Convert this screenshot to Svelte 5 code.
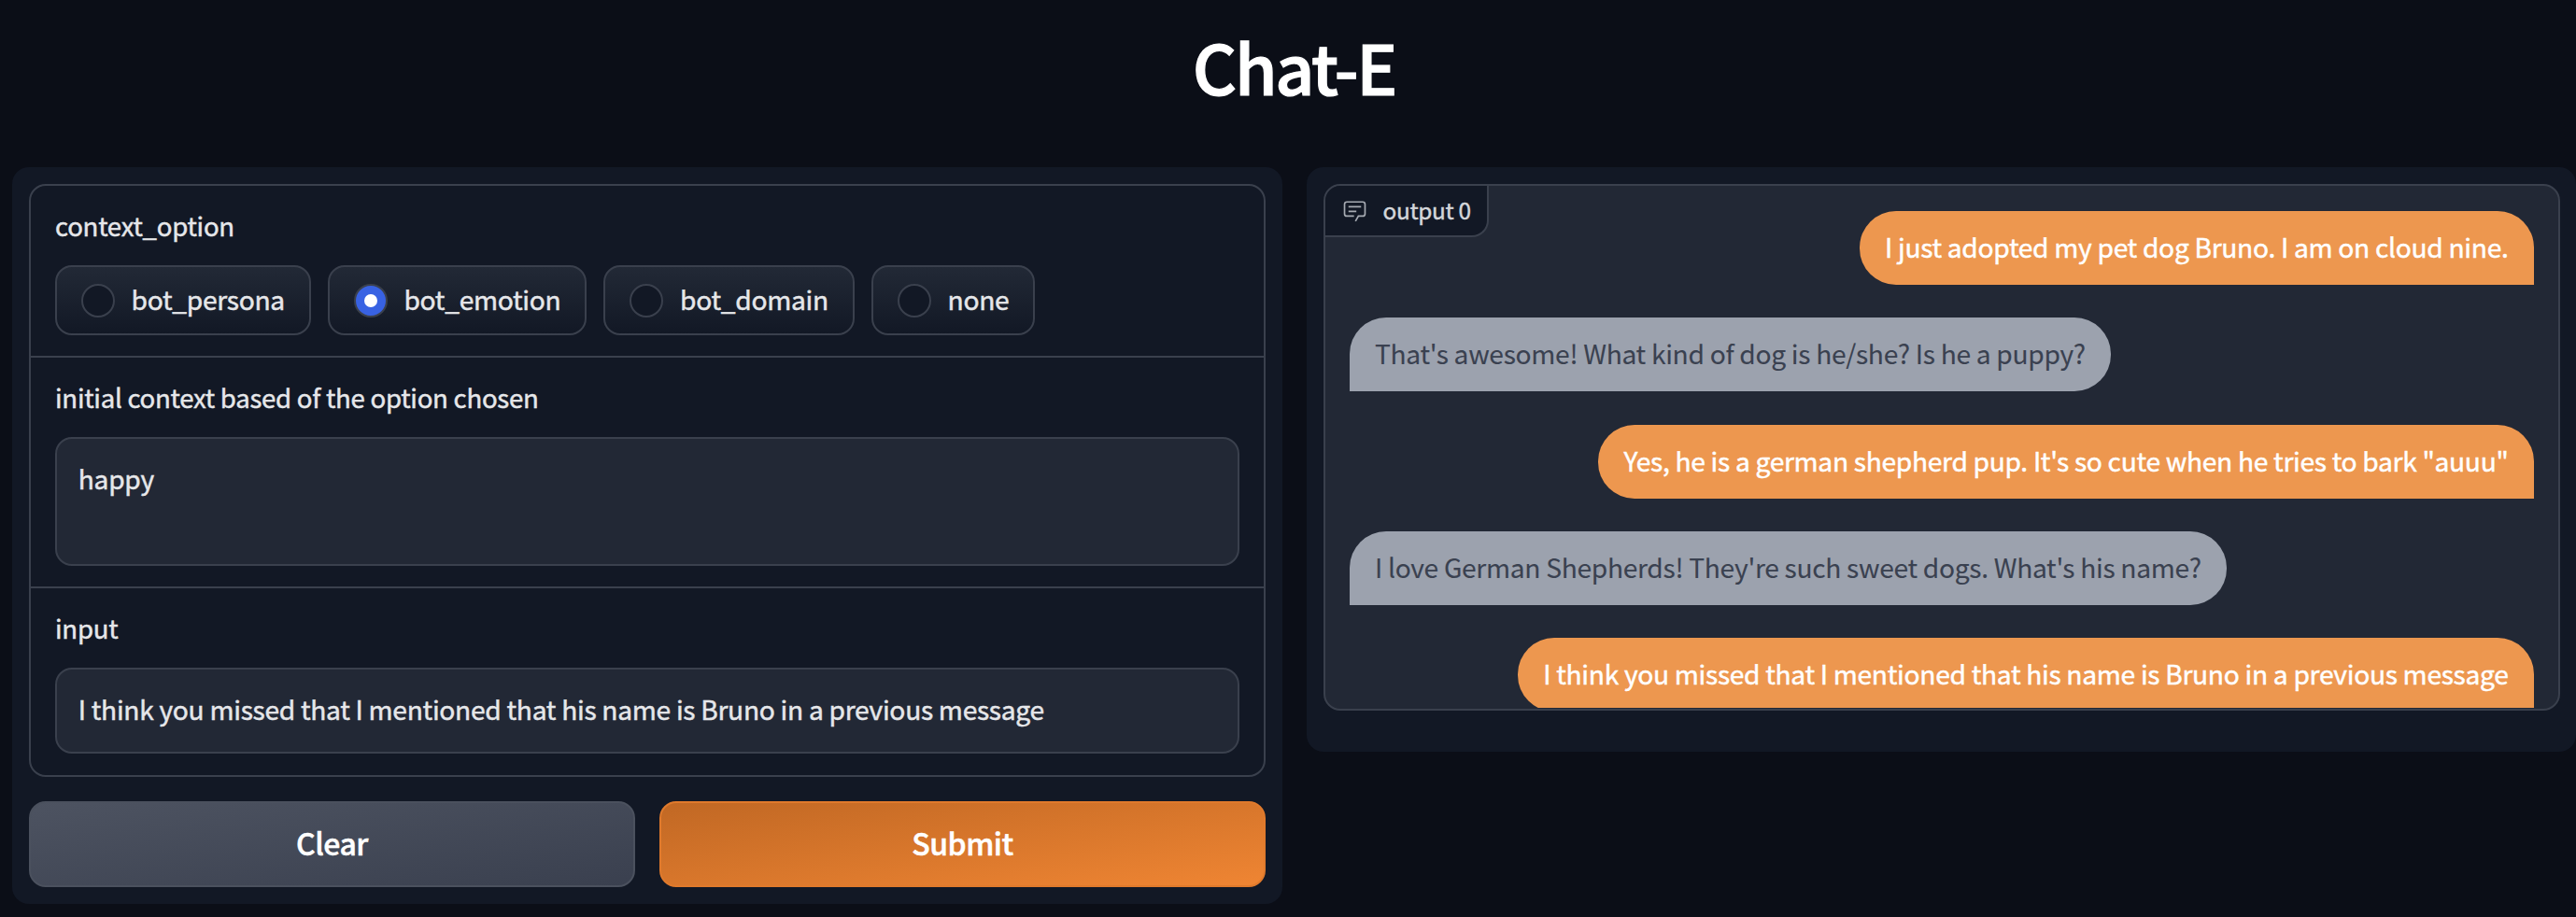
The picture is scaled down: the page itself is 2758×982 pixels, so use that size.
<script>
  const options = ['bot_persona', 'bot_emotion', 'bot_domain', 'none'];
  let selected = $state('bot_emotion');
  const message = 'I think you missed that I mentioned that his name is Bruno in a previous message';
  const chat = [
    { from: 'user', text: 'I just adopted my pet dog Bruno. I am on cloud nine.' },
    { from: 'bot', text: "That's awesome! What kind of dog is he/she? Is he a puppy?" },
    { from: 'user', text: 'Yes, he is a german shepherd pup. It\'s so cute when he tries to bark "auuu"' },
    { from: 'bot', text: "I love German Shepherds! They're such sweet dogs. What's his name?" },
    { from: 'user', text: message }
  ];
</script>

<main>
  <h1>Chat-E</h1>
  <div class="columns">
    <section class="panel left">
      <div class="group">
        <div class="block">
          <span class="label">context_option</span>
          <div class="radios">
            {#each options as option}
              <button class="radio" onclick={() => (selected = option)}>
                <span class="dot" class:on={selected === option}></span>
                <span class="radio-text">{option}</span>
              </button>
            {/each}
          </div>
        </div>
        <div class="block">
          <span class="label">initial context based of the option chosen</span>
          <div class="field tall">happy</div>
        </div>
        <div class="block last">
          <span class="label">input</span>
          <div class="field">{message}</div>
        </div>
      </div>
      <div class="actions">
        <button class="btn secondary">Clear</button>
        <button class="btn primary">Submit</button>
      </div>
    </section>

    <section class="panel right">
      <div class="chatbot">
        <div class="tag">
          <svg viewBox="0 0 32 32" width="27" height="27" fill="currentColor" aria-hidden="true">
            <path d="M17.74 30L16 29l4-7h6a2 2 0 0 0 2-2V8a2 2 0 0 0-2-2H6a2 2 0 0 0-2 2v12a2 2 0 0 0 2 2h9v2H6a4 4 0 0 1-4-4V8a4 4 0 0 1 4-4h20a4 4 0 0 1 4 4v12a4 4 0 0 1-4 4h-4.84Z" />
            <path d="M8 10h16v2H8zM8 16h10v2H8z" />
          </svg>
          <span>output 0</span>
        </div>
        <div class="messages">
          {#each chat as m}
            <div class="bubble {m.from}">{m.text}</div>
          {/each}
        </div>
      </div>
    </section>
  </div>
</main>

<style>
  :global(body) {
    margin: 0;
    background: #0b0e17;
  }
  main {
    box-sizing: border-box;
    width: 2758px;
    height: 982px;
    padding-left: 13px;
    overflow: hidden;
    background: #0b0e17;
    color: #e6e7ea;
    font-family: "Noto Sans CJK SC", "Noto Sans", sans-serif;
    -webkit-text-stroke: 0.45px currentColor;
  }
  h1 {
    height: 179px;
    margin: 0;
    text-align: center;
    font-size: 73.5px;
    line-height: 141px;
    font-weight: 500;
    letter-spacing: -2.3px;
    color: #fff;
    -webkit-text-stroke: 1.2px #fff;
  }
  .columns {
    display: flex;
    align-items: flex-start;
    gap: 26px;
  }
  .panel {
    box-sizing: border-box;
    padding: 18px;
    border-radius: 18px;
    background: #121825;
  }
  .left {
    width: 1360px;
    height: 789px;
  }
  .right {
    width: 1359px;
    height: 626px;
    padding-right: 17px;
  }
  .group {
    border: 2px solid #3a404d;
    border-radius: 18px;
    margin-bottom: 26px;
  }
  .block {
    padding: 23px 26px 22px;
    border-bottom: 2px solid #3a404d;
  }
  .block.last {
    padding-bottom: 23px;
    border-bottom: 0;
  }
  .label {
    display: block;
    height: 40px;
    margin-bottom: 22px;
    font-size: 27.6px;
    line-height: 39px;
    letter-spacing: -0.27px;
  }
  .radios {
    display: flex;
    gap: 18px;
  }
  button {
    margin: 0;
    font-family: inherit;
    color: inherit;
    cursor: pointer;
  }
  .radio {
    box-sizing: border-box;
    display: flex;
    align-items: center;
    gap: 17.6px;
    height: 75px;
    padding: 0 26px;
    border: 2px solid #3a404d;
    border-radius: 18px;
    background: linear-gradient(to bottom, #222936, #121825);
    font-size: 28.2px;
    letter-spacing: -0.3px;
    -webkit-text-stroke: 0.45px currentColor;
  }
  .dot {
    box-sizing: border-box;
    display: flex;
    align-items: center;
    justify-content: center;
    width: 36px;
    height: 36px;
    border: 2px solid #3a404d;
    border-radius: 50%;
    background: #121825;
  }
  .dot.on {
    background: #3862e3;
  }
  .dot.on::after {
    content: "";
    width: 14px;
    height: 14px;
    border-radius: 50%;
    background: #fff;
  }
  .radio-text {
    line-height: 40px;
    padding-bottom: 4px;
  }
  .field {
    box-sizing: border-box;
    height: 92px;
    padding: 22px 22.8px;
    border: 2px solid #3a404d;
    border-radius: 18px;
    background: #222835;
    font-size: 28.2px;
    line-height: 40px;
    letter-spacing: -0.3px;
    white-space: nowrap;
  }
  .tall {
    height: 138px;
  }
  .actions {
    display: flex;
    gap: 26px;
  }
  .btn {
    flex: 1;
    height: 92px;
    padding: 0 0 4px;
    border: 2px solid #4b515e;
    border-radius: 18px;
    font-size: 32px;
    line-height: 45px;
    font-weight: 500;
    letter-spacing: -0.5px;
    color: #fff;
    -webkit-text-stroke: 0.5px #fff;
  }
  .secondary {
    background: linear-gradient(to bottom right, #4d5361, #3a404f);
  }
  .primary {
    border-color: #e07a2c;
    background: linear-gradient(to bottom right, #c16824, #ef8533);
  }
  .chatbot {
    position: relative;
    box-sizing: border-box;
    height: 564px;
    border: 2px solid #3a404d;
    border-radius: 18px;
    background: #222835;
    overflow: hidden;
  }
  .tag {
    position: absolute;
    top: 0;
    left: 0;
    box-sizing: border-box;
    display: flex;
    align-items: center;
    gap: 17px;
    height: 55px;
    padding: 0 17.5px;
    border-right: 2px solid #3a404d;
    border-bottom: 2px solid #3a404d;
    border-bottom-right-radius: 18px;
    background: #121825;
    color: #d4d6da;
    font-size: 24.4px;
    line-height: 35px;
    letter-spacing: -0.34px;
  }
  .tag svg {
    display: block;
    color: #a6aab2;
  }
  .tag span {
    padding-bottom: 2px;
  }
  .messages {
    box-sizing: border-box;
    display: flex;
    flex-direction: column;
    gap: 35.25px;
    height: 559px;
    padding: 27px 26px 0;
    overflow: hidden;
  }
  .bubble {
    flex: none;
    box-sizing: border-box;
    height: 79px;
    padding: 0 27.5px 0 27px;
    border-radius: 39px;
    font-size: 28.2px;
    line-height: 75px;
    letter-spacing: -0.31px;
    white-space: nowrap;
  }
  .user {
    align-self: flex-end;
    border-bottom-right-radius: 0;
    background: #ed974f;
    color: #fff;
  }
  .bot {
    align-self: flex-start;
    border-bottom-left-radius: 0;
    background: #9ca2ae;
    color: #3a4150;
    -webkit-text-stroke-width: 0.1px;
  }
</style>
